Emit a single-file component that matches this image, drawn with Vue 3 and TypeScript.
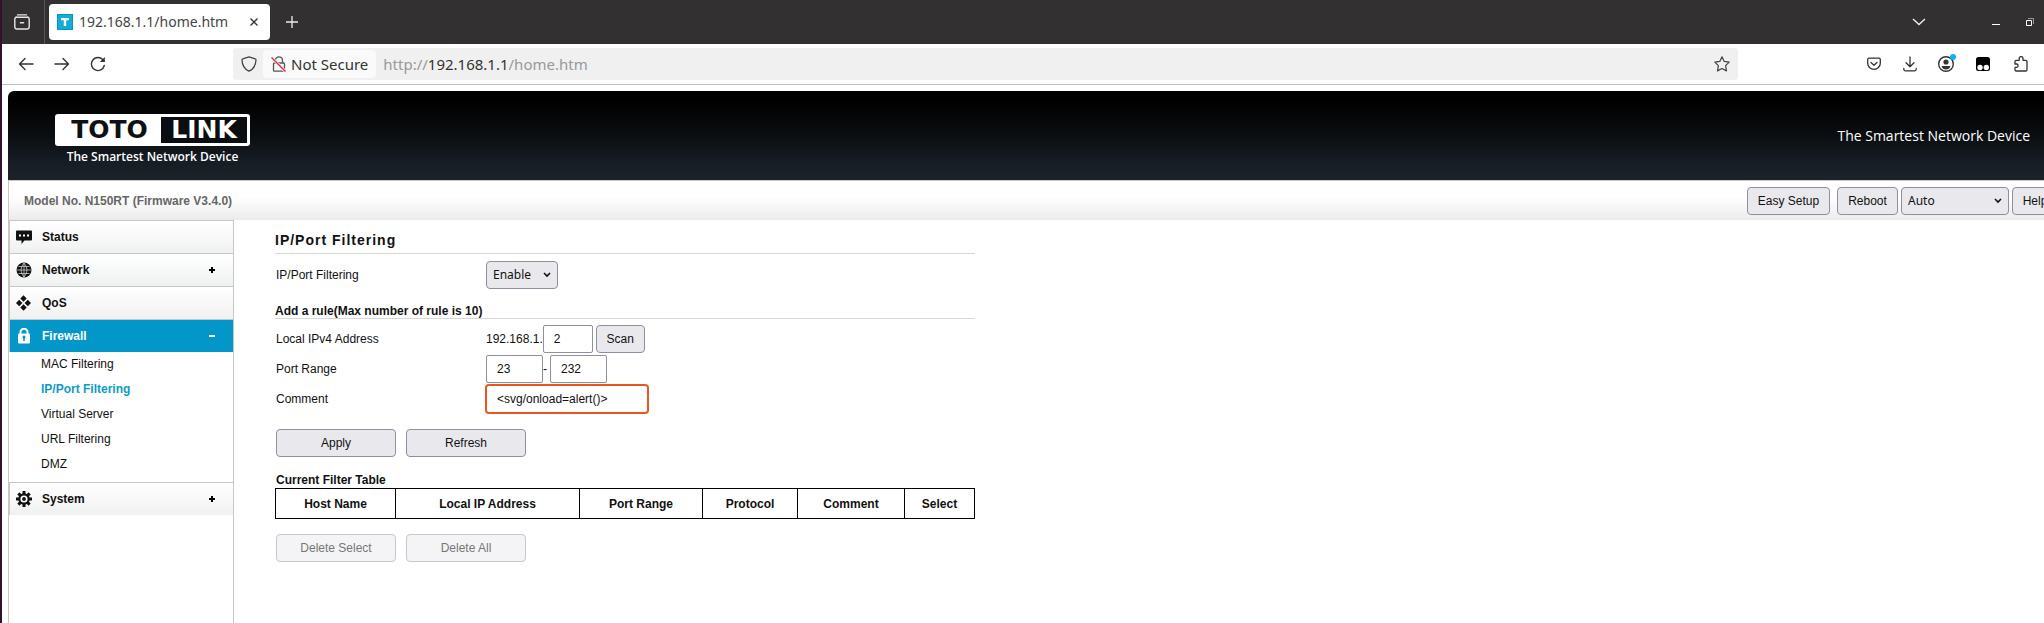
<script setup lang="ts">
import { ref } from 'vue'

interface MenuItem {
  label: string
  icon: string
  mark?: 'plus' | 'minus'
  children?: string[]
}

const menu: MenuItem[] = [
  { label: 'Status', icon: 'status' },
  { label: 'Network', icon: 'network', mark: 'plus' },
  { label: 'QoS', icon: 'qos' },
  {
    label: 'Firewall',
    icon: 'firewall',
    mark: 'minus',
    children: ['MAC Filtering', 'IP/Port Filtering', 'Virtual Server', 'URL Filtering', 'DMZ'],
  },
  { label: 'System', icon: 'system', mark: 'plus' },
]
const current = 'IP/Port Filtering'
const teeth = [0, 45, 90, 135, 180, 225, 270, 315]

const columns = ['Host Name', 'Local IP Address', 'Port Range', 'Protocol', 'Comment', 'Select']

const language = ref('Auto')
const filtering = ref('Enable')
const host = ref('2')
const portFrom = ref('23')
const portTo = ref('232')
const comment = ref('<svg/onload=alert()>')
</script>

<template>
  <div class="window">
    <header class="tabs">
      <button class="icon-btn recent" aria-label="Recent browsing">
        <svg width="16" height="16" viewBox="0 0 16 16" fill="none" stroke="#e6e6e6" stroke-width="1.4" stroke-linecap="round">
          <path d="M3.5 0.9h9M1.9 3.2h12.2" />
          <path d="M2.4 3.2Q.8 3.4.8 5v7.8q0 2.2 2.2 2.2h10q2.2 0 2.2-2.2V5q0-1.6-1.6-1.8M6.4 8.7h3.2" />
        </svg>
      </button>
      <div class="tab">
        <svg class="favicon" width="16" height="16" viewBox="0 0 16 16">
          <path d="M0 0h16v16H0z" fill="#0795bd" />
          <path d="M1 1h14v14H1z" fill="#12add6" />
          <path d="M4 4h8v2.3H9.2V12H6.8V6.300H4z" fill="#fff" />
        </svg>
        <span class="tab-title">192.168.1.1/home.htm</span>
        <button class="icon-btn close" aria-label="Close tab">
          <svg width="8" height="8" viewBox="0 0 8 8" stroke="#333" stroke-width="1.3"><path d="M.5.5l7 7M7.500.5l-7 7" /></svg>
        </button>
      </div>
      <button class="icon-btn new-tab" aria-label="New tab">
        <svg width="12" height="12" viewBox="0 0 12 12" stroke="#eee" stroke-width="1.3"><path d="M6 0v12M0 6h12" /></svg>
      </button>
      <div class="window-buttons">
        <button class="icon-btn" aria-label="List all tabs">
          <svg width="14" height="8" viewBox="0 0 14 8" fill="none" stroke="#eee" stroke-width="1.4"><path d="M1 1l6 5.600L13 1" /></svg>
        </button>
        <button class="icon-btn minimize" aria-label="Minimize">
          <svg width="8" height="8" viewBox="0 0 8 8"><path d="M0 6h8v1H0z" fill="#fff" /></svg>
        </button>
        <button class="icon-btn restore" aria-label="Restore">
          <svg width="8" height="8" viewBox="0 0 8 8" fill="none"><path d="M2 .5h5.500V6" stroke="#999" /><path d="M.5 2.500h5v5h-5z" stroke="#fff" /></svg>
        </button>
      </div>
    </header>

    <nav class="toolbar" aria-label="Browser">
      <div class="history">
        <button class="icon-btn" aria-label="Back">
          <svg width="16" height="14" viewBox="0 0 16 14" fill="none" stroke="#333" stroke-width="1.4" stroke-linecap="round" stroke-linejoin="round"><path d="M15 7H1.500M7 1.500L1.500 7 7 12.500" /></svg>
        </button>
        <button class="icon-btn" aria-label="Forward">
          <svg width="16" height="14" viewBox="0 0 16 14" fill="none" stroke="#333" stroke-width="1.4" stroke-linecap="round" stroke-linejoin="round"><path d="M1 7h13.500M9 1.500L14.500 7 9 12.500" /></svg>
        </button>
        <button class="icon-btn" aria-label="Reload">
          <svg width="16" height="16" viewBox="0 0 16 16" fill="none" stroke="#333" stroke-width="1.400" stroke-linecap="round"><path d="M14.300 9.500A6.500 6.500 0 1 1 12.700 3.600L14 5" /><path d="M14.800 1v5H9.800z" fill="#333" stroke="none" /></svg>
        </button>
      </div>
      <div class="url-bar">
        <svg class="shield" width="16" height="16" viewBox="0 0 16 16" fill="none" stroke="#444" stroke-width="1.3" stroke-linejoin="round"><path d="M8 .8l6.200 2q.8 0 .8.900C14.900 9 13 12.900 8 15.200 3 12.900 1.100 9 1 3.700q0-.9.800-.9z" /></svg>
        <button class="security">
          <svg width="16" height="16" viewBox="0 0 16 16" fill="none"><path d="M4.500 7V4.300a3.500 3.500 0 0 1 7 0V7M3.500 7h9q1 0 1 1v6q0 1.200-1 1.200h-9q-1 0-1-1.200V8q0-1 1-1z" stroke="#555" stroke-width="1.300" /><path d="M1 2l14 14" stroke="#fafafa" stroke-width="3" /><path d="M.5 1.500L14.500 15.500" stroke="#e22850" stroke-width="1.400" /></svg>
          Not Secure
        </button>
        <span class="url">http://<b>192.168.1.1</b>/home.htm</span>
        <button class="icon-btn star" aria-label="Bookmark this page">
          <svg width="16" height="16" viewBox="0 0 16 16" fill="none" stroke="#444" stroke-width="1.2" stroke-linejoin="round"><path d="M8 .8l2.200 4.600 5 .7-3.600 3.600.9 5.200L8 12.500l-4.500 2.400.9-5.200L.8 6.100l5-.7z" /></svg>
        </button>
      </div>
      <div class="extensions">
        <button class="icon-btn" aria-label="Save to Pocket">
          <svg width="14" height="14" viewBox="0 0 14 14" fill="none" stroke="#333" stroke-width="1.300" stroke-linecap="round" stroke-linejoin="round"><path d="M2 1.200h10q1.300 0 1.300 1.300v3.800a6.300 6 0 0 1-12.600 0V2.500Q.7 1.200 2 1.200zM4 5.500l3 2.800 3-2.800" /></svg>
        </button>
        <button class="icon-btn" aria-label="Downloads">
          <svg width="14" height="16" viewBox="0 0 14 16" fill="none" stroke="#333" stroke-width="1.300" stroke-linecap="round" stroke-linejoin="round"><path d="M7 1v9.500M3 6.700l4 4 4-4M.8 12.500v.8q0 1.500 1.500 1.500h9.400q1.500 0 1.500-1.500v-.8" /></svg>
        </button>
        <button class="icon-btn" aria-label="Account">
          <svg width="20" height="20" viewBox="0 0 20 20"><circle cx="10" cy="10" r="7.300" fill="none" stroke="#333" stroke-width="1.400" /><circle cx="10" cy="8" r="2.600" fill="#333" /><path d="M5.500 12h9q-1 3.500-4.500 3.500T5.500 12z" fill="#333" /><circle cx="17" cy="3" r="3" fill="#0ab0ff" /></svg>
        </button>
        <button class="icon-btn" aria-label="Tampermonkey">
          <svg width="14" height="14" viewBox="0 0 14 14"><rect width="14" height="14" rx="2.500" fill="#000" /><circle cx="4" cy="10.500" r="2.700" fill="#fff" /><circle cx="10.300" cy="10.500" r="2.700" fill="#fff" /></svg>
        </button>
        <button class="icon-btn" aria-label="Extensions">
          <svg width="14" height="16" viewBox="0 0 14 16" fill="none" stroke="#333" stroke-width="1.300" stroke-linejoin="round"><path d="M1 8V5.500Q1 4.300 2.200 4.300h3V2.500a1.900 1.900 0 0 1 3.800 0v1.800h2.800Q13 4.300 13 5.500v8.300q0 1.200-1.200 1.200H2.200Q1 15 1 13.800v-2.500h1.800a1.700 1.700 0 0 0 0-3.300z" /></svg>
        </button>
      </div>
    </nav>

    <div class="page">
      <div class="banner">
        <div class="brand">
          <div class="logo"><span class="toto">TOTO</span><span class="link">LINK</span></div>
          <div class="tagline">The Smartest Network Device</div>
        </div>
        <div class="slogan">The Smartest Network Device</div>
      </div>

      <div class="frame">
        <div class="info">
          <strong class="model">Model No. N150RT (Firmware V3.4.0)</strong>
          <div class="actions">
            <button class="btn setup">Easy Setup</button>
            <button class="btn reboot">Reboot</button>
            <div class="select language">
              <select v-model="language" aria-label="Language">
                <option>Auto</option>
                <option>English</option>
              </select>
              <svg width="8" height="6" viewBox="0 0 8 6" fill="none" stroke="#111" stroke-width="1.600"><path d="M1 1l3 3 3-3" /></svg>
            </div>
            <button class="btn help">Help</button>
          </div>
        </div>

        <div class="body">
          <nav class="sidebar" aria-label="Router">
            <div v-for="item in menu" :key="item.label" class="group">
              <a href="#" class="item" :class="{ open: item.children }">
                <svg class="item-icon" width="16" height="16" viewBox="0 0 16 16">
                  <g v-if="item.icon === 'status'">
                    <path d="M1 1.500h14q1 0 1 1v8q0 1-1 1H8.500L5.500 15v-3.500H1q-1 0-1-1v-8q0-1 1-1z" fill="#111" />
                    <path d="M3 5.500h2v2H3zM7 5.500h2v2H7zM11 5.500h2v2h-2z" fill="#fff" />
                  </g>
                  <g v-else-if="item.icon === 'network'">
                    <circle cx="8" cy="8" r="7.500" fill="#111" />
                    <path d="M8 1v14M1 8h14M2.500 4.500h11M2.500 11.500h11M8 1Q2 8 8 15M8 1q6 7 0 14" fill="none" stroke="#ddd" stroke-width=".7" />
                  </g>
                  <path v-else-if="item.icon === 'qos'" d="M7.500.300l3.200 3.200-3.200 3.200-3.200-3.200zM3.200 4.800l3.200 3.200-3.200 3.200L0 8zM11.800 4.800L15 8l-3.200 3.200L8.600 8zM7.500 9.300l3.200 3.200-3.200 3.200-3.200-3.200z" fill="#111" />
                  <g v-else-if="item.icon === 'firewall'">
                    <path d="M4.500 6V3.800a3.500 3 0 0 1 7 0V6" fill="none" stroke="#fff" stroke-width="2" />
                    <rect x="2" y="5.500" width="12" height="10" rx="1" fill="#fff" />
                    <path d="M7.200 10h1.600v3H7.200z" fill="#0396c9" />
                    <circle cx="8" cy="9" r="1.500" fill="#0396c9" />
                  </g>
                  <g v-else>
                    <rect v-for="a in teeth" :key="a" x="6.500" y="0" width="3" height="4" fill="#111" :transform="`rotate(${a} 8 8)`" />
                    <circle cx="8" cy="8" r="4.700" fill="#fff" stroke="#111" stroke-width="2.200" />
                    <circle cx="8" cy="8" r="1.900" fill="#111" />
                  </g>
                </svg>
                <span>{{ item.label }}</span>
                <svg v-if="item.mark" class="mark" width="6" height="6" viewBox="0 0 6 6">
                  <path v-if="item.mark === 'plus'" d="M2 0h2v2h2v2H4v2H2V4H0V2h2z" fill="#000" />
                  <path v-else d="M0 2h6v2H0z" fill="#fff" />
                </svg>
              </a>
              <ul v-if="item.children" class="submenu">
                <li v-for="child in item.children" :key="child">
                  <a href="#" :class="{ current: child === current }">{{ child }}</a>
                </li>
              </ul>
            </div>
          </nav>

          <main class="content">
            <h1>IP/Port Filtering</h1>
            <div class="row first">
              <label for="filtering">IP/Port Filtering</label>
              <div class="select enable">
                <select id="filtering" v-model="filtering">
                  <option>Enable</option>
                  <option>Disable</option>
                </select>
                <svg width="8" height="6" viewBox="0 0 8 6" fill="none" stroke="#111" stroke-width="1.600"><path d="M1 1l3 3 3-3" /></svg>
              </div>
            </div>

            <h2>Add a rule(Max number of rule is 10)</h2>
            <form class="rule" @submit.prevent>
              <div class="row">
                <label for="host">Local IPv4 Address</label>
                <span>192.168.1.</span>
                <input id="host" v-model="host" class="host" type="text" />
                <button class="btn scan" type="button">Scan</button>
              </div>
              <div class="row">
                <label for="port-from">Port Range</label>
                <input id="port-from" v-model="portFrom" class="port" type="text" />
                <span class="dash">-</span>
                <input v-model="portTo" class="port" type="text" aria-label="Last port" />
              </div>
              <div class="row">
                <label for="comment">Comment</label>
                <input id="comment" v-model="comment" class="comment" type="text" />
              </div>
              <div class="buttons">
                <button class="btn wide" type="submit">Apply</button>
                <button class="btn wide" type="button">Refresh</button>
              </div>
            </form>

            <table>
              <caption>Current Filter Table</caption>
              <colgroup>
                <col class="c-host" /><col class="c-ip" /><col class="c-port" /><col class="c-proto" /><col class="c-comment" /><col />
              </colgroup>
              <thead>
                <tr><th v-for="c in columns" :key="c" scope="col">{{ c }}</th></tr>
              </thead>
            </table>
            <div class="buttons">
              <button class="btn wide" disabled>Delete Select</button>
              <button class="btn wide" disabled>Delete All</button>
            </div>
          </main>
        </div>
      </div>
    </div>
  </div>
</template>

<style>
body {
  margin: 0;
  background: #fff;
}
</style>

<style scoped>
* {
  box-sizing: border-box;
}
.window {
  display: flex;
  flex-direction: column;
  min-height: 100vh;
  overflow: hidden;
  border-left: 2px solid #35122a;
  font: 12px/16px "Liberation Sans", Arial, sans-serif;
  color: #111;
}
svg {
  display: block;
  flex: none;
}
a {
  color: inherit;
  text-decoration: none;
}
.icon-btn {
  display: flex;
  align-items: center;
  justify-content: center;
  width: 36px;
  height: 32px;
  padding: 0;
  border: 0;
  background: none;
}

/* tab strip */
.tabs {
  display: flex;
  align-items: center;
  height: 44px;
  background: #333031;
  font-family: "Noto Sans", sans-serif;
}
.recent {
  width: 43px;
  height: 44px;
  padding-right: 2px;
  border-right: 1px solid #5b5859;
}
.tab {
  display: flex;
  align-items: center;
  width: 221px;
  height: 36px;
  margin-left: 4px;
  padding: 0 4px 0 8px;
  border-radius: 4px;
  background: #fff;
}
.tab-title {
  flex: 1;
  margin-left: 6px;
  font-size: 14px;
  line-height: 20px;
  color: #444;
  white-space: nowrap;
}
.close {
  width: 24px;
  height: 24px;
}
.new-tab {
  width: 44px;
}
.window-buttons {
  display: flex;
  align-items: center;
  margin-left: auto;
}
.minimize {
  margin-left: 41px;
}
.restore {
  width: 32px;
  margin-right: -2px;
}

/* address bar */
.toolbar {
  display: flex;
  align-items: center;
  height: 41px;
  border-bottom: 1px solid #bdbdbd;
  font-family: "Noto Sans", sans-serif;
}
.history {
  display: flex;
  width: 231px;
  padding-left: 6px;
}
.url-bar {
  display: flex;
  flex: 1;
  align-items: center;
  height: 32px;
  padding-left: 8px;
  border-radius: 4px;
  background: #f0f0f0;
}
.security {
  display: flex;
  align-items: center;
  gap: 4px;
  height: 28px;
  margin-left: 6px;
  padding: 0 8px;
  border: 0;
  border-radius: 4px;
  background: #fafafa;
  color: #333;
  font: 15px/20px "Noto Sans", sans-serif;
}
.url {
  flex: 1;
  margin-left: 7px;
  color: #999;
  font-size: 15px;
  line-height: 20px;
}
.url b {
  color: #333;
  font-weight: 400;
}
.star {
  width: 32px;
}
.extensions {
  display: flex;
  justify-content: flex-end;
  width: 306px;
  padding-right: 4px;
}
.extensions .icon-btn:nth-child(n + 4) {
  width: 38px;
}

/* router page */
.page {
  display: flex;
  flex: 1;
  flex-direction: column;
  padding: 6px 0 0 6px;
}
.banner {
  display: flex;
  align-items: center;
  justify-content: space-between;
  height: 89px;
  padding: 0 14px 0 47px;
  border-top-left-radius: 6px;
  background: linear-gradient(#000 10%, #0b0e11 50%, #161d25 80%, #1c2328);
  color: #fff;
  font-family: "Open Sans", sans-serif;
}
.brand {
  width: 195px;
  padding-top: 8px;
}
.logo {
  display: flex;
  height: 32px;
  padding: 3px;
  border-radius: 3px;
  background: #fff;
  font: bold 25px/26px "DejaVu Sans", sans-serif;
}
.toto {
  flex: 1;
  color: #0e1114;
  text-align: center;
}
.link {
  width: 86px;
  background: #0b0e11;
  text-align: center;
}
.tagline {
  margin-top: 2px;
  font-size: 12px;
  font-weight: 600;
  line-height: 18px;
  text-align: center;
}
.slogan {
  font-size: 14px;
  line-height: 20px;
}
.frame {
  display: flex;
  flex: 1;
  flex-direction: column;
  border-top: 1px solid #c7c7c7;
  border-left: 1px solid #c7c7c7;
}
.info {
  display: flex;
  align-items: center;
  justify-content: space-between;
  height: 39px;
  padding-left: 15px;
  background: linear-gradient(#fff 40%, #ebebeb);
}
.model {
  color: #666;
}
.actions {
  display: flex;
  align-items: center;
  gap: 3px;
  margin-right: -14px;
}
.btn {
  height: 28px;
  padding: 0;
  border: 1px solid #8f8f9d;
  border-radius: 4px;
  background: #e9e9ed;
  color: #111;
  font: 12px/16px "Liberation Sans", Arial, sans-serif;
}
.btn:disabled {
  border-color: #c7c7ce;
  background: #f4f4f6;
  color: #777;
}
.setup {
  width: 83px;
  margin-right: 4px;
}
.reboot {
  width: 61px;
}
.help {
  width: 46px;
}
.select {
  position: relative;
}
.select select {
  width: 100%;
  height: 28px;
  padding: 0 6px;
  border: 1px solid #8f8f9d;
  border-radius: 4px;
  appearance: none;
  background: #e9e9ed;
  color: #111;
  font: 12px/16px "Noto Sans", sans-serif;
}
.select svg {
  position: absolute;
  top: 11px;
  right: 7px;
  pointer-events: none;
}
.language {
  width: 108px;
}
.enable {
  width: 72px;
}

.body {
  display: flex;
  flex: 1;
}
.sidebar {
  width: 225px;
  border-right: 1px solid #c7c7c7;
}
.item {
  display: flex;
  align-items: center;
  height: 33px;
  padding: 0 18px 0 6px;
  border-top: 1px solid #c7c7c7;
  border-left: 1px solid #c7c7c7;
  background: linear-gradient(#fff, #eff1f0);
  font-weight: bold;
}
.item.open {
  background: #0396c9;
  color: #fff;
}
.item-icon {
  margin-right: 10px;
}
.mark {
  margin-left: auto;
}
.submenu {
  margin: 0;
  padding: 0 0 5px 32px;
  list-style: none;
  line-height: 25px;
}
.submenu .current {
  color: #0d9bcb;
  font-weight: bold;
}
.content {
  width: 700px;
  margin-left: 41px;
}
h1 {
  margin: 0;
  padding: 11px 0 4px;
  border-bottom: 1px solid #d8d8d8;
  font-size: 14px;
  line-height: 18px;
  letter-spacing: 1px;
}
h2 {
  margin: 14px 0 5px;
  border-bottom: 1px solid #d8d8d8;
  font-size: 12px;
  line-height: 14px;
}
.row {
  display: flex;
  align-items: center;
  height: 30px;
}
.first {
  margin-top: 6px;
}
.row label {
  width: 211px;
  padding-left: 1px;
}
input {
  height: 28px;
  padding: 0 10px;
  border: 1px solid #8f8f9d;
  border-radius: 2px;
  background: #fff;
  color: #111;
  font: 12px/16px "Liberation Sans", Arial, sans-serif;
}
.host {
  width: 50px;
  margin-right: 3px;
}
.scan {
  width: 49px;
}
.port {
  width: 57px;
}
.dash {
  width: 7px;
}
.comment {
  width: 162px;
  border-color: #e95420;
  border-radius: 3px;
  box-shadow: 0 0 0 1px #e95420;
}
.buttons {
  display: flex;
  gap: 10px;
  margin: 15px 0 0 1px;
}
.wide {
  width: 120px;
}
table {
  width: 100%;
  margin-top: 15px;
  border-collapse: collapse;
  table-layout: fixed;
}
caption {
  padding-left: 1px;
  font-weight: bold;
  text-align: left;
}
th {
  height: 30px;
  padding: 0;
  border: 1px solid #000;
}
.c-host {
  width: 120px;
}
.c-ip {
  width: 184px;
}
.c-port {
  width: 123px;
}
.c-proto {
  width: 95px;
}
.c-comment {
  width: 107px;
}
</style>
